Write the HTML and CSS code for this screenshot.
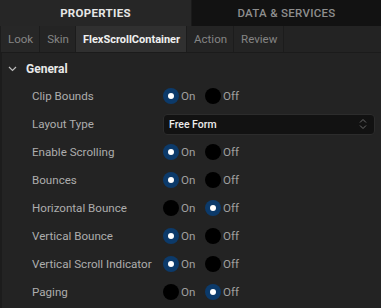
FILE: index.html
```html
<!DOCTYPE html>
<html lang="en">
<head>
  <meta charset="UTF-8" />
  <title>Properties</title>
  <link rel="stylesheet" href="styles.css">
</head>
<body>

  <div class="main-tabs">
    <div class="main-tab active">PROPERTIES</div>
    <div class="main-tab">DATA &amp; SERVICES</div>
  </div>

  <div class="sub-tabs">
    <div class="sub-tab">Look</div>
    <div class="sub-tab">Skin</div>
    <div class="sub-tab active">FlexScrollContainer</div>
    <div class="sub-tab">Action</div>
    <div class="sub-tab">Review</div>
  </div>

  <div class="panel">
    <div class="section-head">
      <svg class="chevron" width="9" height="6" viewBox="0 0 9 6"><path d="M1 1 L4.5 4.5 L8 1" fill="none" stroke="#bdbdbd" stroke-width="1.2"/></svg>
      <span>General</span>
    </div>

    <div class="row">
      <div class="label">Clip Bounds</div>
      <div class="radios">
        <span class="radio on"></span><span class="opt">On</span>
        <span class="radio"></span><span class="opt">Off</span>
      </div>
    </div>

    <div class="row">
      <div class="label">Layout Type</div>
      <div class="select">
        <span>Free Form</span>
        <svg width="8" height="12" viewBox="0 0 8 12"><path d="M1 4.5 L4 1.5 L7 4.5 M1 7.5 L4 10.5 L7 7.5" fill="none" stroke="#6a6a6a" stroke-width="1"/></svg>
      </div>
    </div>

    <div class="row">
      <div class="label">Enable Scrolling</div>
      <div class="radios">
        <span class="radio on"></span><span class="opt">On</span>
        <span class="radio"></span><span class="opt">Off</span>
      </div>
    </div>

    <div class="row">
      <div class="label">Bounces</div>
      <div class="radios">
        <span class="radio on"></span><span class="opt">On</span>
        <span class="radio"></span><span class="opt">Off</span>
      </div>
    </div>

    <div class="row">
      <div class="label">Horizontal Bounce</div>
      <div class="radios">
        <span class="radio"></span><span class="opt">On</span>
        <span class="radio on"></span><span class="opt">Off</span>
      </div>
    </div>

    <div class="row">
      <div class="label">Vertical Bounce</div>
      <div class="radios">
        <span class="radio on"></span><span class="opt">On</span>
        <span class="radio"></span><span class="opt">Off</span>
      </div>
    </div>

    <div class="row">
      <div class="label">Vertical Scroll Indicator</div>
      <div class="radios">
        <span class="radio on"></span><span class="opt">On</span>
        <span class="radio"></span><span class="opt">Off</span>
      </div>
    </div>

    <div class="row">
      <div class="label">Paging</div>
      <div class="radios">
        <span class="radio"></span><span class="opt">On</span>
        <span class="radio on"></span><span class="opt">Off</span>
      </div>
    </div>
  </div>

</body>
</html>
```

FILE: styles.css
```css
body {
  margin: 0;
  width: 381px;
  height: 308px;
  overflow: hidden;
  font-family: Roboto, "Liberation Sans", sans-serif;
  background-color: #232323;
  color: #b4b4b4;
}

.main-tabs {
  display: flex;
  height: 26px;
  background-color: #121212;
}

.main-tab {
  flex: 1;
  display: flex;
  align-items: center;
  justify-content: center;
  font-size: 11.5px;
  font-weight: 500;
  letter-spacing: 0.3px;
  color: #8e8e8e;
}

.main-tab.active {
  flex: 0 0 191px;
  background-color: #262626;
  color: #e6e6e6;
  font-weight: 700;
  border-right: 1px solid #1a1a1a;
}

.sub-tabs {
  display: flex;
  height: 26px;
  background-color: #232323;
  border-left: 1px solid #1c1c1c;
  border-bottom: 1px solid #1b1b1b;
}

.sub-tab {
  display: flex;
  align-items: center;
  padding: 0 6px 0 7px;
  font-size: 11.5px;
  color: #858585;
  background-color: #242424;
  border-right: 1px solid #1c1c1c;
}

.sub-tab:first-child {
  background-color: #272727;
}

.sub-tab.active {
  background-color: #303030;
  color: #f0f0f0;
  font-size: 11px;
  font-weight: 700;
}

.panel {
  padding-top: 3px;
  border-left: 2px solid #1c1c1c;
  height: 260px;
}

.section-head {
  display: flex;
  align-items: center;
  height: 26px;
  padding-left: 6px;
  font-size: 12px;
  font-weight: 700;
  color: #e8e8e8;
}

.chevron {
  margin-right: 9px;
}

.row {
  display: flex;
  align-items: center;
  height: 28px;
}

.label {
  width: 131px;
  padding-left: 30px;
  font-size: 11.6px;
  color: #adadad;
}

.radios {
  display: flex;
  align-items: center;
}

.radio {
  width: 16px;
  height: 16px;
  border-radius: 50%;
  background-color: #000;
  display: flex;
  align-items: center;
  justify-content: center;
}

.radio.on {
  background-color: #0c3a6a;
}

.radio.on::after {
  content: "";
  width: 6px;
  height: 6px;
  border-radius: 50%;
  background-color: #fff;
}

.opt {
  margin-left: 2px;
  width: 24px;
  font-size: 11.6px;
  color: #a0a0a0;
}

.select {
  display: flex;
  align-items: center;
  justify-content: space-between;
  width: 198px;
  height: 19px;
  padding: 0 7px 0 5px;
  background-color: #121212;
  border: 1px solid #2c2c2c;
  border-radius: 4px;
  font-size: 10.5px;
  font-weight: 500;
  color: #ececec;
}
```
